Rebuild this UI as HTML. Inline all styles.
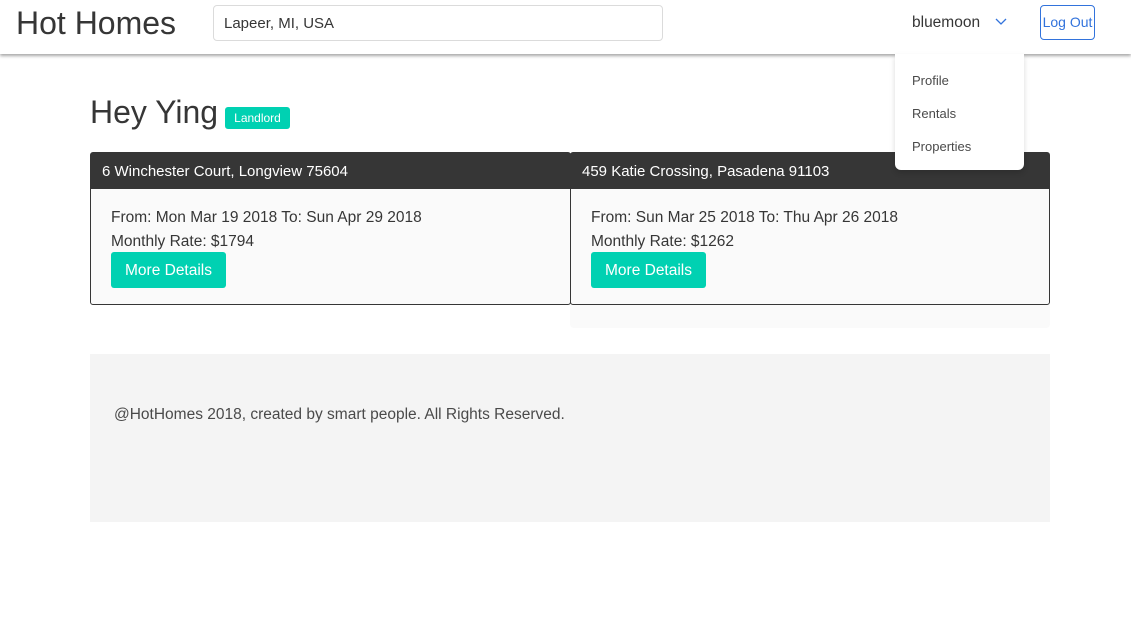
<!DOCTYPE html>
<html><head><style>
*{box-sizing:border-box;margin:0;padding:0}
body{width:1131px;height:637px;background:#fff;font-family:"Liberation Sans",sans-serif;color:#4a4a4a;position:relative;overflow:hidden}
.a{position:absolute;white-space:nowrap}
.nav{left:0;top:0;width:1131px;height:54px;background:#fff;box-shadow:0 2px 3px rgba(0,0,0,.35)}
.card{border:1px solid #363636;border-radius:3px;background:#fafafa}
.hd{height:36px;background:#363636;color:#fff;font-size:15px;line-height:37px;padding-left:11px}
.btn{background:#00d1b2;color:#fff;border-radius:3px;font-size:15.5px;text-align:center;line-height:36px}
.t{font-size:15.5px;color:#363636}
</style></head><body>
<div class="a nav"></div>
<div class="a" style="left:16px;top:4px;font-size:32px;line-height:38px;color:#363636">Hot Homes</div>
<div class="a" style="left:213px;top:5px;width:450px;height:36px;border:1px solid #dbdbdb;border-radius:4px;padding-left:10px;line-height:36px;font-size:15px;color:#363636">Lapeer, MI, USA</div>
<div class="a" style="left:912px;top:13px;font-size:15.5px;color:#363636;line-height:20px">bluemoon</div>
<svg class="a" style="left:994px;top:17px" width="14" height="10" viewBox="0 0 14 10"><path d="M2 2 L7 7 L12 2" fill="none" stroke="#3273dc" stroke-width="1.3"/></svg>
<div class="a" style="left:1040px;top:5px;width:55px;height:35px;border:1px solid #3273dc;border-radius:4px;color:#3273dc;font-size:14px;text-align:center;line-height:33px">Log Out</div>
<div class="a" style="left:90px;top:93px;font-size:32px;color:#363636;line-height:38px">Hey Ying</div>
<div class="a" style="left:225px;top:107px;width:65px;height:22px;background:#00d1b2;color:#fff;border-radius:3px;font-size:12px;text-align:center;line-height:22px">Landlord</div>
<div class="a" style="left:570px;top:152px;width:480px;height:176px;background:#fafafa;border-radius:4px"></div>
<div class="a card" style="left:90px;top:152px;width:481px;height:153px">
<div class="hd">6 Winchester Court, Longview 75604</div>
<div class="a t" style="left:20px;top:56px">From: Mon Mar 19 2018 To: Sun Apr 29 2018</div>
<div class="a t" style="left:20px;top:80px">Monthly Rate: $1794</div>
<div class="a btn" style="left:20px;top:99px;width:115px;height:36px;line-height:38px">More Details</div>
</div>
<div class="a card" style="left:570px;top:152px;width:480px;height:153px">
<div class="hd">459 Katie Crossing, Pasadena 91103</div>
<div class="a t" style="left:20px;top:56px">From: Sun Mar 25 2018 To: Thu Apr 26 2018</div>
<div class="a t" style="left:20px;top:80px">Monthly Rate: $1262</div>
<div class="a btn" style="left:20px;top:99px;width:115px;height:36px;line-height:38px">More Details</div>
</div>
<div class="a" style="left:895px;top:54px;width:129px;height:116px;background:#fff;border-radius:0 0 6px 6px;box-shadow:0 3px 6px rgba(0,0,0,.15)">
<div class="a" style="left:17px;top:19px;font-size:13px;color:#4a4a4a">Profile</div>
<div class="a" style="left:17px;top:52px;font-size:13px;color:#4a4a4a">Rentals</div>
<div class="a" style="left:17px;top:85px;font-size:13px;color:#4a4a4a">Properties</div>
</div>
<div class="a" style="left:90px;top:354px;width:960px;height:168px;background:#f4f4f4">
<div class="a" style="left:24px;top:52px;font-size:15.5px;color:#4a4a4a">@HotHomes 2018, created by smart people. All Rights Reserved.</div>
</div>
</body></html>
